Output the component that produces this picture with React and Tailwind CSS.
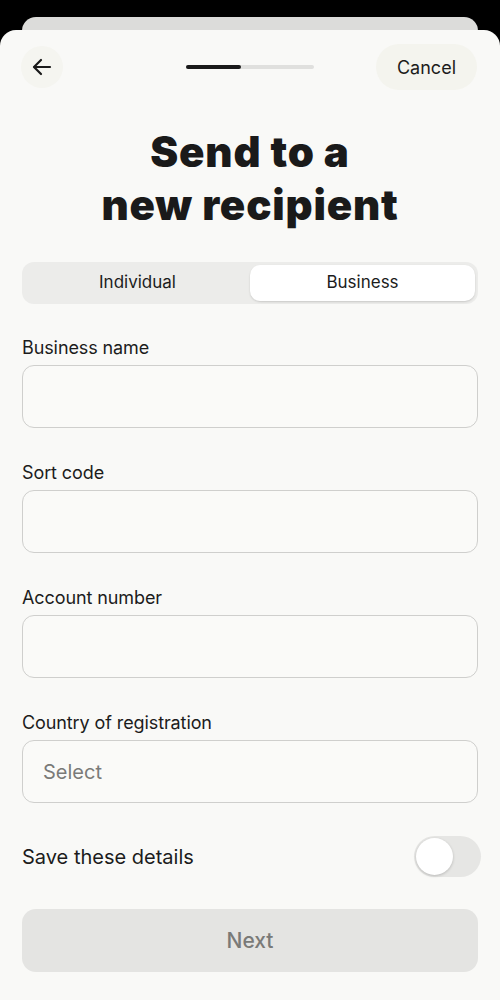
import React from "react";

function Field({ label, placeholder }) {
  return (
    <div className="flex flex-col">
      <div className="text-[18px] leading-[24px] text-[#1c1c1c] mb-[5px] tracking-[-0.1px]">{label}</div>
      <div className="h-[63px] rounded-[12px] border border-[#cfcfcd] bg-[#fafaf8] flex items-center px-[20px]">
        {placeholder && <span className="text-[20px] text-[#7a7a78]">{placeholder}</span>}
      </div>
    </div>
  );
}

export default function App() {
  return (
    <div className="w-[500px] h-[1000px] bg-black overflow-hidden" style={{ fontFamily: "Inter, 'Liberation Sans', sans-serif" }}>
      <div className="pt-[17px] flex flex-col">
        <div className="mx-[22px] h-[30px] rounded-t-[14px] bg-[#dcdcda]" />
        <div className="-mt-[17px] h-[983px] rounded-t-[16px] bg-[#f9f9f7] px-[22px] flex flex-col">
          {/* header */}
          <div className="flex items-center h-[48px] mt-[13px]">
            <div className="w-[42px] h-[42px] -ml-[1px] rounded-full bg-[#f5f5f0] flex items-center justify-center">
              <svg width="24" height="24" viewBox="0 0 24 24" fill="none" stroke="#1a1a1a" strokeWidth="2.2" strokeLinecap="round" strokeLinejoin="round">
                <path d="M20 12H4.5" />
                <path d="M11 5l-7 7 7 7" />
              </svg>
            </div>
            <div className="w-[128px] h-[4px] rounded-full bg-[#e0e0de] flex ml-[123px]">
              <div className="w-[55px] h-[4px] rounded-full bg-[#1a1a1a]" />
            </div>
            <div className="ml-auto h-[46px] px-[21px] rounded-full bg-[#f4f4ee] flex items-center text-[18px] text-[#1c1c1c] mr-[1px]">Cancel</div>
          </div>
          {/* title */}
          <h1 className="mt-[34px] text-center text-[42px] leading-[53px] font-black text-[#1a1a1a] tracking-[0.8px]">
            Send to a<br />new recipient
          </h1>
          {/* segmented */}
          <div className="mt-[31px] h-[42px] rounded-[12px] bg-[#ececea] p-[3px] flex">
            <div className="flex-1 flex items-center justify-center text-[17px] text-[#1c1c1c]">Individual</div>
            <div className="flex-1 flex items-center justify-center rounded-[10px] bg-white shadow-[0_1px_2px_rgba(0,0,0,0.15)] text-[17px] text-[#1c1c1c]">Business</div>
          </div>
          <div className="mt-[32px] flex flex-col gap-[33px]">
            <Field label="Business name" />
            <Field label="Sort code" />
            <Field label="Account number" />
            <Field label="Country of registration" placeholder="Select" />
          </div>
          <div className="mt-[33px] flex items-center justify-between">
            <span className="text-[20px] text-[#1c1c1c]">Save these details</span>
            <div className="w-[67px] h-[41px] rounded-full bg-[#e6e6e4] p-[2px] flex items-center -mr-[3px]">
              <div className="w-[37px] h-[37px] rounded-full bg-white shadow-[0_1px_3px_rgba(0,0,0,0.2)]" />
            </div>
          </div>
          <div className="mt-[32px] h-[63px] rounded-[14px] bg-[#e4e4e2] flex items-center justify-center text-[21px] text-[#7a7a78] font-medium">Next</div>
        </div>
      </div>
    </div>
  );
}
